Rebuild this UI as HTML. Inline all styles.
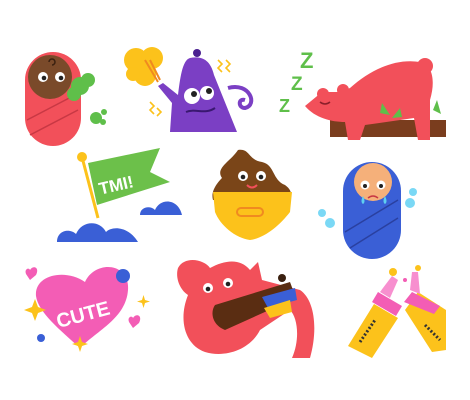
<!DOCTYPE html>
<html><head><style>
html,body{margin:0;padding:0;background:#fff;width:470px;height:400px;overflow:hidden}
svg{display:block}
text{font-family:"Liberation Sans",sans-serif;font-weight:bold}
</style></head><body>
<svg width="470" height="400" viewBox="0 0 470 400">
<!-- baby red -->
<rect x="25" y="52" width="56" height="94" rx="28" fill="#f2505a"/>
<path d="M27 120 L75 95 M30 135 L78 110" stroke="#c83844" stroke-width="1.5"/>
<circle cx="50" cy="77" r="22" fill="#7a4a2a"/>
<circle cx="43" cy="77" r="5" fill="#fff"/><circle cx="60" cy="77" r="5" fill="#fff"/>
<circle cx="44" cy="78" r="2.3" fill="#222"/><circle cx="61" cy="78" r="2.3" fill="#222"/>
<path d="M49 62 a3 3 0 1 1 3 3" stroke="#3a2010" fill="none" stroke-width="1.5"/>
<circle cx="80" cy="86" r="9" fill="#5fbf4a"/><circle cx="88" cy="80" r="7" fill="#5fbf4a"/><circle cx="74" cy="94" r="7" fill="#5fbf4a"/>
<circle cx="96" cy="118" r="6" fill="#5fbf4a"/><circle cx="104" cy="112" r="3" fill="#5fbf4a"/><circle cx="103" cy="122" r="3" fill="#5fbf4a"/>
<!-- yellow cloud -->
<circle cx="136" cy="60" r="12" fill="#fcc21b"/><circle cx="152" cy="58" r="11" fill="#fcc21b"/><circle cx="145" cy="75" r="11" fill="#fcc21b"/><circle cx="133" cy="74" r="7" fill="#fcc21b"/>
<path d="M145 60 L158 82 M150 60 L160 80" stroke="#f08a20" stroke-width="2"/>
<!-- kettle -->
<path d="M190 58 C200 56 210 58 214 75 L237 132 L170 132 L172 103 L158 86 L163 83 L178 95 C180 80 182 60 190 58Z" fill="#7b3fc4"/>
<circle cx="197" cy="53" r="4" fill="#4a2090"/>
<path d="M228 88 C250 82 258 105 245 108 C238 108 238 98 245 100" stroke="#7b3fc4" stroke-width="4" fill="none"/>
<circle cx="192" cy="96" r="8" fill="#fff"/><circle cx="207" cy="93" r="7" fill="#fff"/>
<circle cx="194" cy="94" r="3" fill="#222"/><circle cx="209" cy="91" r="3" fill="#222"/>
<path d="M186 112 C195 108 205 115 215 108" stroke="#3a1870" stroke-width="2" fill="none"/>
<path d="M218 60 l4 4 -4 4 4 4 M226 60 l4 4 -4 4 4 4 M150 102 l4 4 -4 4 4 4 M157 108 l4 4 -4 4" stroke="#fcc21b" stroke-width="1.6" fill="none"/>
<!-- Zs -->
<text x="300" y="68" font-size="22" fill="#5fbf4a">Z</text>
<text x="291" y="90" font-size="19" fill="#5fbf4a">Z</text>
<text x="279" y="112" font-size="18" fill="#5fbf4a">Z</text>
<!-- sleeping bear -->
<rect x="330" y="120" width="116" height="17" fill="#7a3d1e"/>
<path d="M305 106 L322 92 L340 92 L350 88 C370 70 395 58 420 62 C432 64 436 80 430 100 L430 140 L418 140 L414 118 L365 125 L360 140 L348 140 L345 122 C332 122 315 118 305 106Z" fill="#f2505a"/>
<circle cx="425" cy="66" r="8" fill="#f2505a"/><circle cx="323" cy="94" r="6" fill="#f2505a"/><circle cx="343" cy="90" r="6" fill="#f2505a"/>
<path d="M320 102 q5 4 10 0" stroke="#8a1f2a" stroke-width="1.5" fill="none"/>
<path d="M382 103 l8 12 -10 -2Z M400 108 l-8 10 10 -1Z M437 100 l4 14 -8 -4Z" fill="#5fbf4a"/>
<!-- flag -->
<path d="M82 157 L98 218" stroke="#fcc21b" stroke-width="3"/><circle cx="82" cy="157" r="5" fill="#fcc21b"/>
<path d="M88 163 L160 148 L150 172 L170 182 L97 205Z" fill="#6cc04a"/>
<text x="98" y="190" font-size="17" fill="#fff" transform="rotate(-13 120 182)">TMI!</text>
<path d="M57 242 C57 230 70 228 76 234 C82 220 100 220 106 232 C112 226 128 226 138 242Z" fill="#3a5fd6"/>
<path d="M140 215 C140 207 150 205 155 210 C160 198 178 198 182 215Z" fill="#3a5fd6"/>
<!-- poop -->
<path d="M238 150 C250 148 248 160 262 162 C275 165 272 180 285 185 C295 192 290 200 290 200 L213 200 C210 190 220 180 222 178 C215 168 230 162 238 150Z" fill="#7a4518"/>
<circle cx="243" cy="176" r="5" fill="#fff"/><circle cx="261" cy="176" r="5" fill="#fff"/>
<circle cx="243" cy="177" r="2.3" fill="#222"/><circle cx="261" cy="177" r="2.3" fill="#222"/>
<path d="M247 185 q5 5 10 0" stroke="#f2505a" stroke-width="2" fill="none"/>
<path d="M213 192 L292 192 L290 212 C280 225 265 238 250 240 C235 238 220 225 215 212Z" fill="#fcc21b"/>
<rect x="237" y="208" width="26" height="8" rx="4" fill="none" stroke="#f08a20" stroke-width="2"/>
<!-- crying baby -->
<rect x="343" y="162" width="58" height="97" rx="29" fill="#3a5fd6"/>
<path d="M345 232 L398 200 M350 248 L398 218" stroke="#2a40a0" stroke-width="1.5"/>
<circle cx="373" cy="182" r="19" fill="#f5b07a"/>
<circle cx="365" cy="185" r="4.5" fill="#fff"/><circle cx="381" cy="185" r="4.5" fill="#fff"/>
<circle cx="365" cy="186" r="2" fill="#222"/><circle cx="381" cy="186" r="2" fill="#222"/>
<path d="M368 198 q5 -4 10 0" stroke="#c83844" stroke-width="1.5" fill="none"/>
<path d="M363 196 q-3 6 0 8 q3 -2 0 -8Z M385 196 q-3 6 0 8 q3 -2 0 -8Z" fill="#5fd0f0"/>
<circle cx="322" cy="213" r="4" fill="#7ad8f5"/><circle cx="330" cy="223" r="5" fill="#7ad8f5"/><circle cx="413" cy="192" r="4" fill="#7ad8f5"/><circle cx="410" cy="203" r="5" fill="#7ad8f5"/>
<!-- heart -->
<path d="M85 282 C95 260 130 262 128 290 C126 318 98 330 80 348 C60 330 38 312 36 296 C34 275 65 268 85 282Z" fill="#f35db5"/>
<text x="55" y="322" font-size="20" fill="#fff" transform="rotate(-15 80 312)">CUTE</text>
<circle cx="123" cy="276" r="7" fill="#3a5fd6"/>
<circle cx="41" cy="338" r="4" fill="#3a5fd6"/>
<path d="M30 270 c3 -5 10 -3 6 5 l-6 5 -4 -6 c-2 -5 3 -7 4 -4Z M133 318 c3 -5 10 -3 6 5 l-6 5 -4 -6 c-2 -5 3 -7 4 -4Z" fill="#f35db5"/>
<path d="M32 307 l3 -8 3 8 8 3 -8 3 -3 8 -3 -8 -8 -3Z M78 342 l2 -6 2 6 6 2 -6 2 -2 6 -2 -6 -6 -2Z M142 300 l1.5 -5 1.5 5 5 1.5 -5 1.5 -1.5 5 -1.5 -5 -5 -1.5Z" fill="#fcc21b"/>
<!-- eating bear -->
<path d="M178 268 C185 255 205 260 210 268 C225 260 240 258 250 270 L258 262 L262 280 L300 290 C315 300 318 330 310 358 L292 358 C300 340 298 318 290 310 L260 330 C250 350 225 358 205 352 C185 345 178 320 188 295 C180 290 175 278 178 268Z" fill="#f2505a"/>
<circle cx="208" cy="288" r="5" fill="#fff"/><circle cx="228" cy="283" r="5" fill="#fff"/>
<circle cx="208" cy="289" r="2.3" fill="#222"/><circle cx="228" cy="284" r="2.3" fill="#222"/>
<path d="M215 305 L290 282 L296 298 L225 330 C212 325 210 312 215 305Z" fill="#5a2d12"/>
<path d="M262 297 L295 288 L297 300 L268 308Z" fill="#3a5fd6"/><path d="M264 308 L290 300 L292 312 L270 318Z" fill="#fcc21b"/>
<circle cx="282" cy="278" r="4" fill="#3a2010"/>
<!-- bottles -->
<path d="M348 346 L374 304 L398 318 L372 358Z" fill="#fcc21b"/>
<path d="M372 302 L378 292 L402 306 L396 316Z" fill="#f35db5"/>
<path d="M380 292 L392 276 L398 280 L390 298Z" fill="#f78fcf"/>
<path d="M405 310 L418 292 L446 310 L446 350 L432 352Z" fill="#fcc21b"/>
<path d="M404 302 L412 292 L440 306 L434 314Z" fill="#f35db5"/>
<path d="M410 290 L412 272 L418 272 L420 294Z" fill="#f78fcf"/>
<path d="M360 342 L375 320 M425 325 L440 340" stroke="#333" stroke-width="3" stroke-dasharray="2 2"/>
<circle cx="393" cy="272" r="4" fill="#fcc21b"/><circle cx="418" cy="268" r="3" fill="#fcc21b"/><circle cx="405" cy="280" r="2" fill="#f35db5"/>
</svg>
</body></html>
